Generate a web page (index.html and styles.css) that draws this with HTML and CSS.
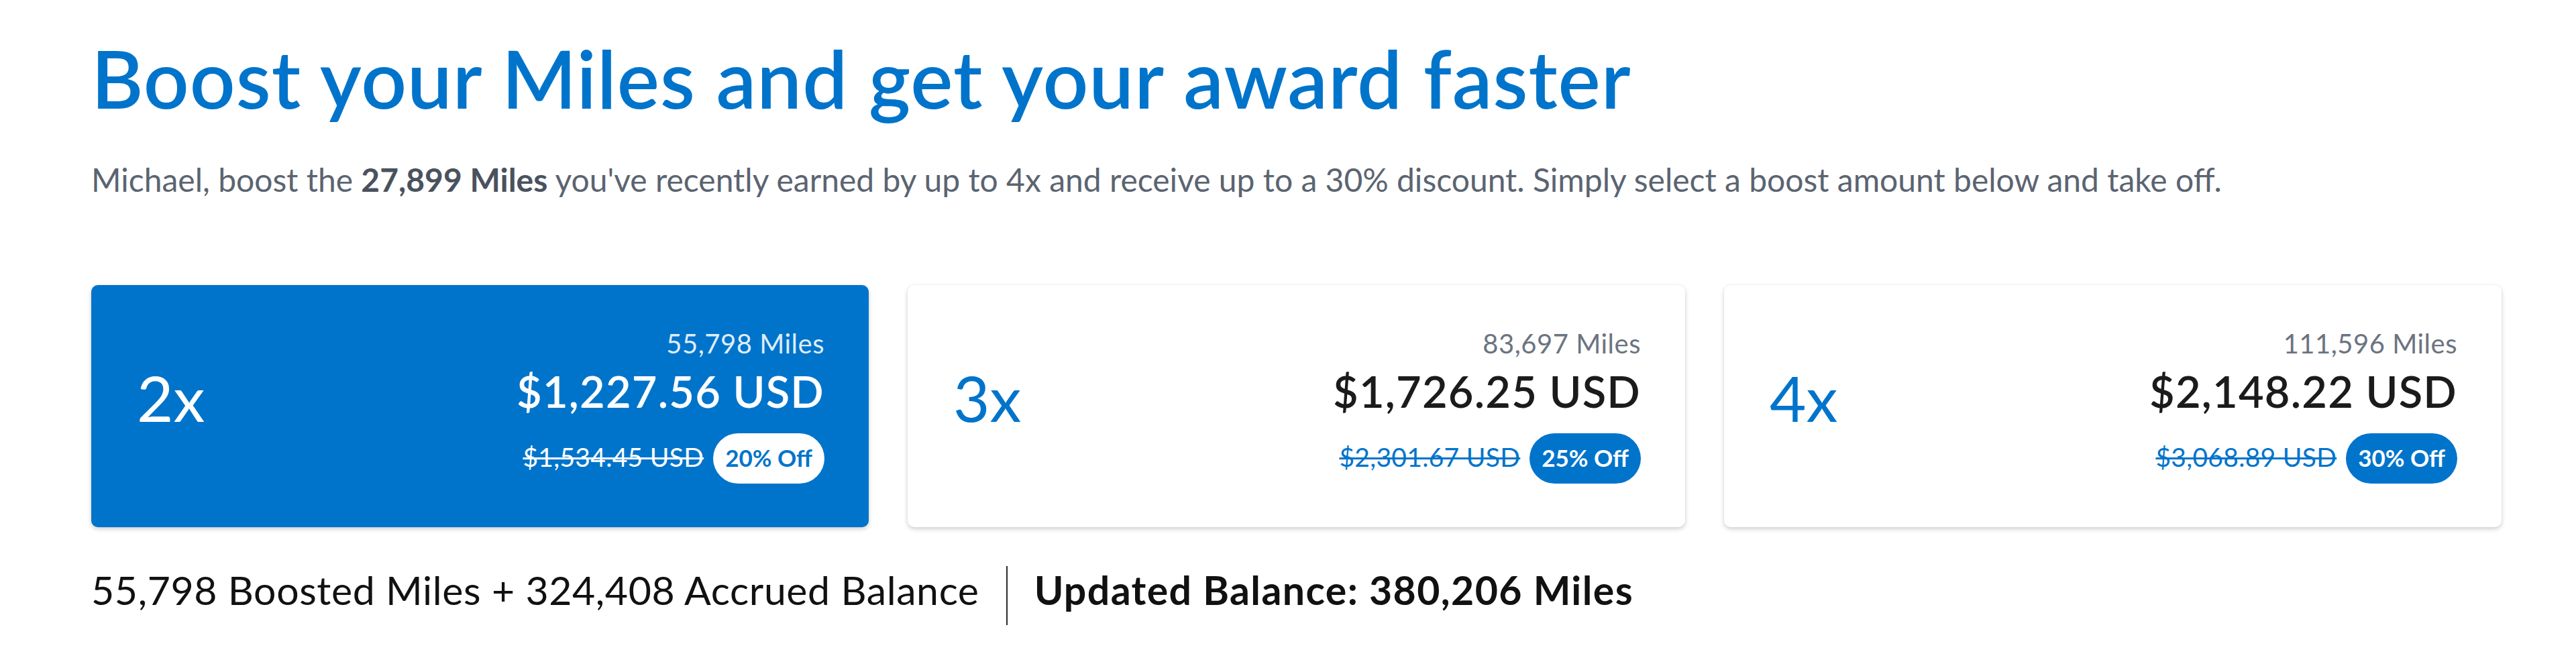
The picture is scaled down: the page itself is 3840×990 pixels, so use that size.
FILE: index.html
```html
<!DOCTYPE html>
<html lang="en">
<head>
<meta charset="utf-8">
<title>Boost your Miles</title>
<link rel="stylesheet" href="styles.css">
</head>
<body>
<main class="boost">
  <h1 class="boost-title">Boost your Miles and get your award faster</h1>
  <p class="boost-intro">Michael, boost the <strong>27,899 Miles</strong> you've recently earned by up to 4x and receive up to a 30% discount. Simply select a boost amount below and take off.</p>

  <div class="options">
    <button class="option option--selected" type="button">
      <span class="option-factor">2x</span>
      <span class="option-detail">
        <span class="option-miles">55,798 Miles</span>
        <span class="option-price">$1,227.56 USD</span>
        <span class="option-deal">
          <s class="option-was">$1,534.45 USD</s>
          <span class="option-badge">20% Off</span>
        </span>
      </span>
    </button>

    <button class="option" type="button">
      <span class="option-factor">3x</span>
      <span class="option-detail">
        <span class="option-miles">83,697 Miles</span>
        <span class="option-price">$1,726.25 USD</span>
        <span class="option-deal">
          <s class="option-was">$2,301.67 USD</s>
          <span class="option-badge">25% Off</span>
        </span>
      </span>
    </button>

    <button class="option" type="button">
      <span class="option-factor">4x</span>
      <span class="option-detail">
        <span class="option-miles">111,596 Miles</span>
        <span class="option-price">$2,148.22 USD</span>
        <span class="option-deal">
          <s class="option-was">$3,068.89 USD</s>
          <span class="option-badge">30% Off</span>
        </span>
      </span>
    </button>
  </div>

  <div class="summary">
    <span class="summary-sum">55,798 Boosted Miles + 324,408 Accrued Balance</span>
    <span class="summary-rule"></span>
    <strong class="summary-total">Updated Balance: 380,206 Miles</strong>
  </div>
</main>
</body>
</html>
```

FILE: styles.css
```css
* {
  box-sizing: border-box;
}

html,
body {
  margin: 0;
  background: #ffffff;
}

body {
  font-family: "Lato", "Liberation Sans", sans-serif;
  color: #1b1b1b;
}

.boost {
  padding: 45px 0 0 136px;
}

.boost-title {
  margin: 0;
  font-size: 119px;
  line-height: 142px;
  font-weight: 600;
  color: #0074cb;
  letter-spacing: 1px;
}

.boost-intro {
  margin: 53px 0 0;
  font-size: 48px;
  line-height: 56px;
  color: #5b6471;
}

.boost-intro strong {
  font-weight: 700;
  color: #4a525e;
}

/* boost option cards */
.options {
  display: grid;
  grid-template-columns: repeat(3, 1159px);
  gap: 58px;
  margin-top: 129px;
}

.option {
  display: flex;
  align-items: center;
  justify-content: space-between;
  height: 361px;
  padding: 0 66px 0 68px;
  border: 0;
  border-radius: 10px;
  background: #ffffff;
  box-shadow: 0 3px 7px rgba(0, 0, 0, 0.18), 0 0 3px rgba(0, 0, 0, 0.06);
  font-family: inherit;
  text-align: left;
  cursor: pointer;
}

.option-factor {
  margin-bottom: 26px;
  font-size: 94px;
  line-height: 112px;
  font-weight: 400;
  color: #0074cb;
}

.option-detail {
  display: flex;
  flex-direction: column;
  align-items: flex-end;
}

.option-miles {
  font-size: 40px;
  line-height: 44px;
  letter-spacing: 0.5px;
  color: #6c7480;
}

.option-price {
  margin-top: 11px;
  font-size: 65px;
  line-height: 76px;
  font-weight: 600;
  letter-spacing: 1.2px;
  color: #1b1b1b;
}

.option-deal {
  display: flex;
  align-items: baseline;
  gap: 14px;
  margin-top: 25px;
}

.option-was {
  font-size: 39px;
  line-height: 44px;
  letter-spacing: 0.3px;
  color: #0074cb;
  text-decoration-thickness: 3px;
}

.option-badge {
  padding: 16px 18px 19px;
  border-radius: 40px;
  background: #0074cb;
  color: #ffffff;
  font-size: 35px;
  line-height: 40px;
  font-weight: 700;
}

/* the chosen card is filled with the brand blue */
.option--selected {
  background: #0074cb;
}

.option--selected .option-factor,
.option--selected .option-price,
.option--selected .option-was {
  color: #ffffff;
}

.option--selected .option-miles {
  color: rgba(255, 255, 255, 0.88);
}

.option--selected .option-badge {
  background: #ffffff;
  color: #0074cb;
}

/* balance line under the cards */
.summary {
  display: flex;
  align-items: flex-start;
  margin-top: 58px;
  font-size: 59px;
  line-height: 72px;
  color: #111111;
}

.summary-sum {
  letter-spacing: 0.6px;
}

.summary-rule {
  width: 2px;
  height: 88px;
  margin: 0 40px;
  background: #2a2a2a;
}

.summary-total {
  font-weight: 700;
  letter-spacing: 1.4px;
}
```
